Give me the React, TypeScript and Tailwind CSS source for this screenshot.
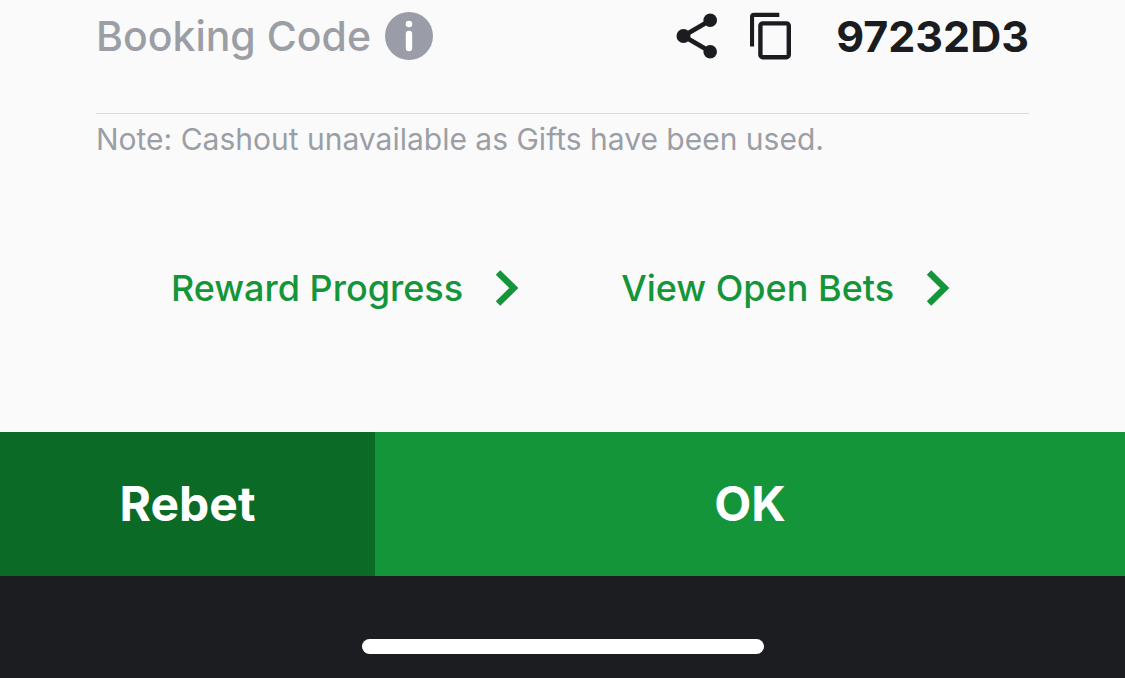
import React from "react";

function InfoIcon() {
  return (
    <svg viewBox="0 0 48 48" className="size-12" aria-hidden="true">
      <circle cx="24" cy="24" r="24" fill="#9a9da8" />
      <circle cx="24" cy="12" r="3.3" fill="#fff" />
      <path d="M24 22v14" stroke="#fff" strokeWidth="6.4" strokeLinecap="round" />
    </svg>
  );
}

function ShareIcon() {
  return (
    <svg viewBox="0 0 42 48" className="h-12 w-[42px]" aria-hidden="true">
      <path d="M34 8.5 7.5 24 34 39.5" fill="none" stroke="#1b1c20" strokeWidth="4.8" />
      <circle cx="7.5" cy="24" r="7" fill="#1b1c20" />
      <circle cx="34.2" cy="8.3" r="6.8" fill="#1b1c20" />
      <circle cx="34.2" cy="39.7" r="6.8" fill="#1b1c20" />
    </svg>
  );
}

function CopyIcon() {
  return (
    <svg viewBox="0 0 42 48" className="h-12 w-[42px]" aria-hidden="true">
      <path d="M0 34.4V5Q0 .8 4.2 .8H29.3V4.9H4.1V34.4Z" fill="#1b1c20" />
      <rect x="10.4" y="11.4" width="28.4" height="33.8" rx="2.4" fill="none" stroke="#1b1c20" strokeWidth="4.4" />
    </svg>
  );
}

function ChevronIcon() {
  return (
    <svg viewBox="0 0 24 36" className="h-9 w-6" aria-hidden="true">
      <path d="M3 2.5 18.8 18 3 33.5" fill="none" stroke="#14953a" strokeWidth="6.4" />
    </svg>
  );
}

function ActionLink({ label }: { label: string }) {
  return (
    <a href="#" className="flex items-center gap-8 text-4xl font-medium text-[#14953a]">
      {label}
      <ChevronIcon />
    </a>
  );
}

export default function App() {
  return (
    <div className="flex min-h-screen flex-col bg-[#1c1d21] font-['Inter',sans-serif]">
      <main className="bg-[#fafafb] px-24 pb-31">
        <div className="flex h-[114px] items-start justify-between border-b border-[#d9dbde] pt-3">
          <div className="flex h-12 items-center gap-3.5">
            <span className="text-[41px] leading-12 font-medium text-[#9b9fa5]">Booking Code</span>
            <button type="button" aria-label="Booking code information">
              <InfoIcon />
            </button>
          </div>
          <div className="flex h-12 items-center">
            <button type="button" aria-label="Share" className="mr-8">
              <ShareIcon />
            </button>
            <button type="button" aria-label="Copy booking code" className="mr-11">
              <CopyIcon />
            </button>
            <span className="text-[43px] leading-12 font-bold text-[#1b1c20]">97232D3</span>
          </div>
        </div>
        <p className="pt-1 text-3xl leading-[42px] text-[#9b9fa5]">
          Note: Cashout unavailable as Gifts have been used.
        </p>
        <nav className="flex items-center justify-center gap-[102px] pt-27 pr-1">
          <ActionLink label="Reward Progress" />
          <ActionLink label="View Open Bets" />
        </nav>
      </main>
      <div className="grid h-36 grid-cols-3 text-5xl font-bold text-white">
        <button type="button" className="bg-[#0b6b26]">
          Rebet
        </button>
        <button type="button" className="col-span-2 bg-[#14953a]">
          OK
        </button>
      </div>
      <footer className="flex justify-center pt-[63px] pb-6">
        <div className="h-[15px] w-[402px] rounded-full bg-white" />
      </footer>
    </div>
  );
}
